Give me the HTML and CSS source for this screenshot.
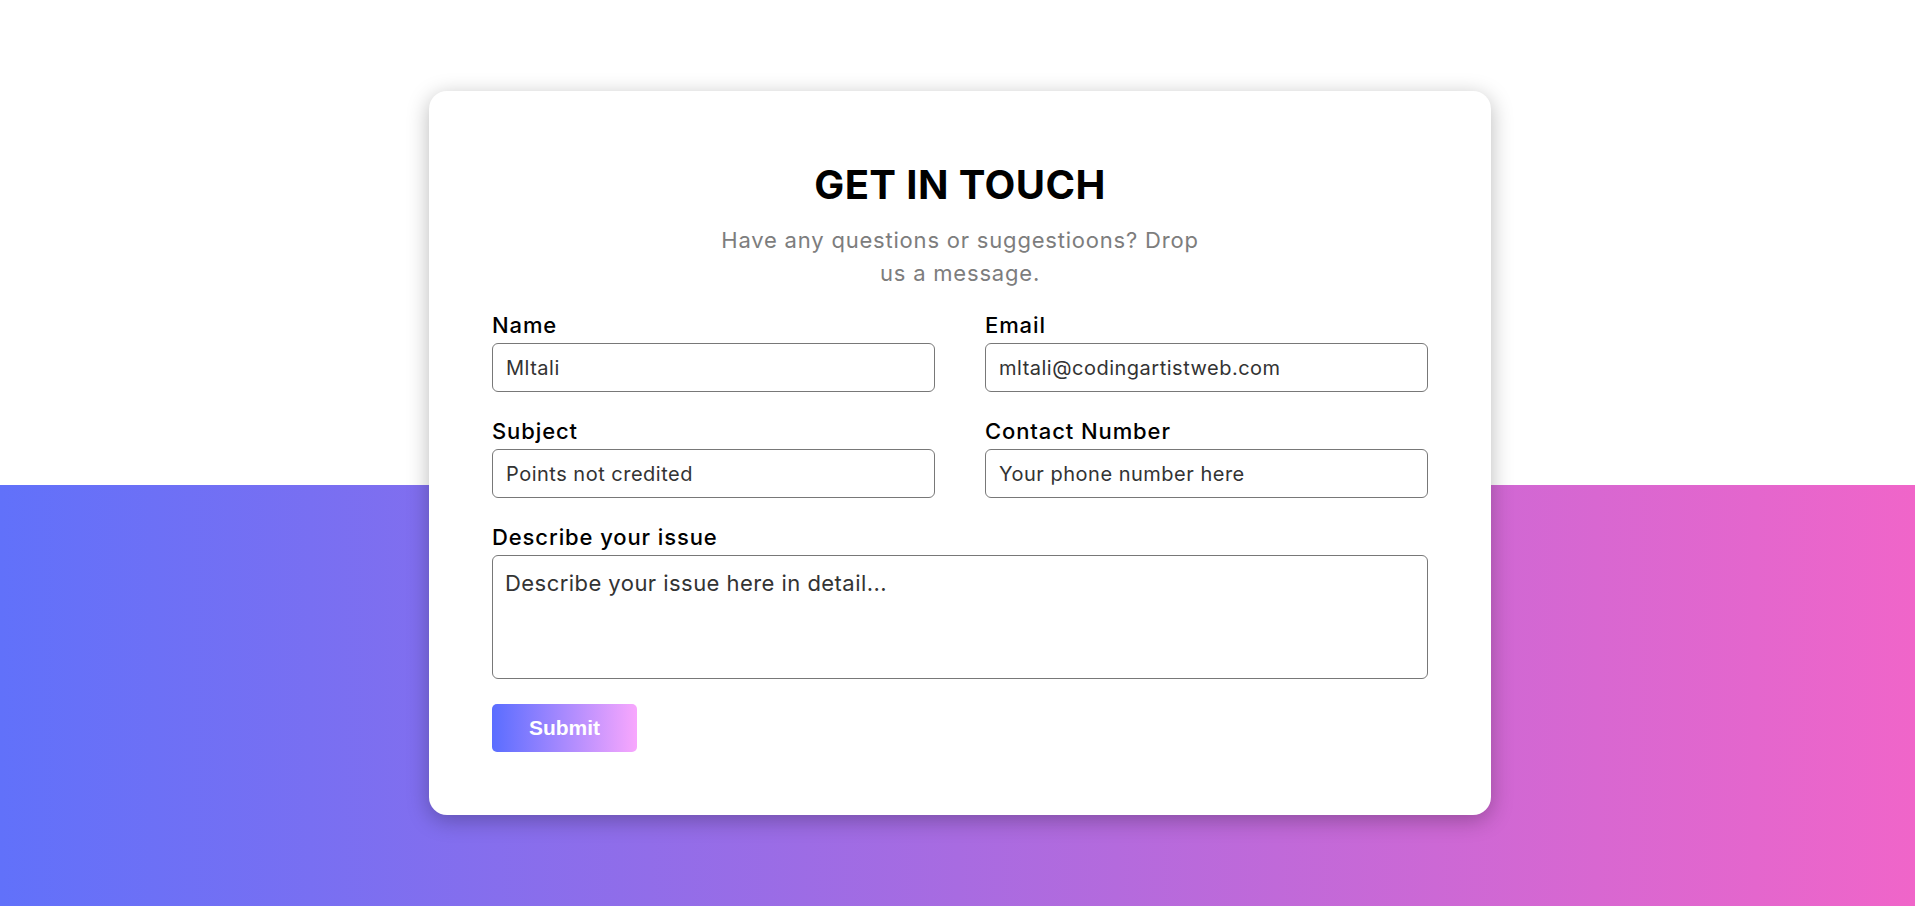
FILE: index.html
```html
<!DOCTYPE html>
<html lang="en">
<head>
<meta charset="utf-8">
<title>Get in touch</title>
<link rel="stylesheet" href="styles.css">
</head>
<body>
<div class="page">
  <div class="card">
    <h1 class="title">GET IN TOUCH</h1>
    <p class="subtitle">Have any questions or suggestioons? Drop<br>us a message.</p>
    <form class="form">
      <div class="grid">
        <div class="field">
          <label class="label" for="name">Name</label>
          <input class="input" id="name" type="text" value="Mltali">
        </div>
        <div class="field">
          <label class="label" for="email">Email</label>
          <input class="input" id="email" type="email" value="mltali@codingartistweb.com">
        </div>
        <div class="field">
          <label class="label" for="subject">Subject</label>
          <input class="input" id="subject" type="text" value="Points not credited">
        </div>
        <div class="field">
          <label class="label" for="phone">Contact Number</label>
          <input class="input" id="phone" type="text" placeholder="Your phone number here">
        </div>
        <div class="field field-full">
          <label class="label" for="issue">Describe your issue</label>
          <textarea class="textarea" id="issue" placeholder="Describe your issue here in detail..."></textarea>
        </div>
      </div>
      <button class="submit" type="button">Submit</button>
    </form>
  </div>
</div>
</body>
</html>
```
FILE: styles.css
```css
* {
  box-sizing: border-box;
}

html, body {
  margin: 0;
  padding: 0;
}

body {
  font-family: "Inter", "Noto Sans", sans-serif;
}

.page {
  min-height: 100vh;
  padding: 91px 0 0 5px;
  background:
    linear-gradient(to right, #6171fa, #a86be1 50%, #f065c9) left bottom / 100% 421px no-repeat,
    #ffffff;
}

.card {
  width: 1062px;
  margin: 0 auto;
  background: #ffffff;
  border-radius: 18px;
  box-shadow: 0 5px 22px rgba(0, 0, 0, 0.28);
  padding: 70px 63px 63px;
}

.title {
  margin: 0;
  text-align: center;
  font-size: 40px;
  line-height: 48px;
  font-weight: 700;
  letter-spacing: 0.4px;
  color: #000;
}

.subtitle {
  margin: 15px 0 0;
  text-align: center;
  font-size: 22px;
  line-height: 33px;
  letter-spacing: 0.8px;
  color: #7d7d7d;
}

.form {
  margin-top: 22px;
  display: flex;
  flex-direction: column;
  align-items: flex-start;
}

.grid {
  width: 100%;
  display: grid;
  grid-template-columns: 1fr 1fr;
  column-gap: 50px;
  row-gap: 26px;
}

.field {
  display: flex;
  flex-direction: column;
}

.field-full {
  grid-column: 1 / -1;
}

.label {
  font-size: 22px;
  line-height: 26px;
  font-weight: 500;
  letter-spacing: 0.9px;
  color: #000;
  margin-bottom: 5px;
}

.input,
.textarea {
  font-family: "Inter", "Noto Sans", sans-serif;
  border: 1px solid #787878;
  border-radius: 6px;
  color: #333;
  background: #fff;
  outline: none;
}

.input {
  height: 49px;
  padding: 0 13px;
  font-size: 20px;
  letter-spacing: 0.5px;
}

.textarea {
  height: 124px;
  padding: 12px 12px;
  font-size: 22px;
  line-height: 30px;
  letter-spacing: 0.45px;
  resize: none;
}

.input::placeholder,
.textarea::placeholder {
  color: #333;
  opacity: 1;
}

.submit {
  margin-top: 25px;
  width: 145px;
  height: 48px;
  border: none;
  border-radius: 5px;
  background: linear-gradient(to right, #5a6dff, #f8a7fd);
  color: #fff;
  font-family: "Liberation Sans", Arial, sans-serif;
  font-weight: 700;
  font-size: 21px;
  cursor: pointer;
}
```
